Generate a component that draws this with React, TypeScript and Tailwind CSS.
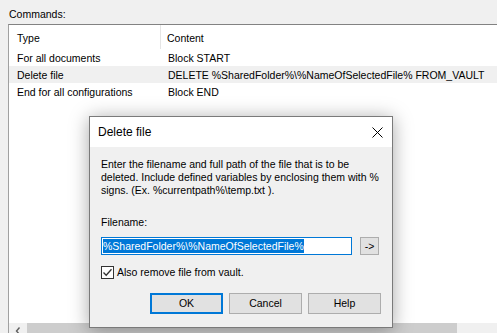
import React from 'react'

const rows = [
  { type: 'For all documents', content: 'Block START', selected: false },
  { type: 'Delete file', content: 'DELETE %SharedFolder%\\%NameOfSelectedFile% FROM_VAULT', selected: true },
  { type: 'End for all configurations', content: 'Block END', selected: false },
]

function DialogButton({ label, primary }: { label: string; primary?: boolean }) {
  return (
    <div
      className={
        primary
          ? 'w-[73px] h-[21px] flex items-center justify-center bg-[#e1e1e1] border-2 border-[#0078d7]'
          : 'w-[73px] h-[21px] flex items-center justify-center bg-[#e1e1e1] border border-[#adadad]'
      }
    >
      {label}
    </div>
  )
}

export default function App() {
  return (
    <div
      className="relative w-[497px] h-[333px] overflow-hidden bg-[#f0f0f0] text-[10.5px] leading-[13px] text-black"
      style={{ fontFamily: '"Liberation Sans", Arial, sans-serif' }}
    >
      <div className="h-[24px] pl-[9px] pt-[8px]">Commands:</div>

      {/* command list */}
      <div className="ml-[8px] h-[309px] flex flex-col bg-white border-l border-t border-l-[#a0a0a0] border-t-[#828282]">
        <div className="h-[24px] flex items-center">
          <div className="w-[152px] h-full flex items-center pl-[8px] pt-[2px] border-r border-[#e5e5e5]">Type</div>
          <div className="pl-[6px] pt-[2px]">Content</div>
        </div>
        {rows.map((r) => (
          <div
            key={r.type}
            className={
              r.selected
                ? 'h-[17px] flex items-center pt-[2px] bg-[#f0f0f0]'
                : 'h-[17px] flex items-center pt-[2px]'
            }
          >
            <div className="w-[152px] pl-[8px] whitespace-nowrap">{r.type}</div>
            <div className="pl-[7px] whitespace-nowrap">{r.content}</div>
          </div>
        ))}
        <div className="flex-1" />
        <div className="h-[10px] flex">
          <div className="w-[18px] bg-[#f0f0f0] flex justify-center pt-[4px]">
            <svg width="6" height="8" viewBox="0 0 6 8">
              <path d="M4.5 0.5 L1.5 4 L4.5 7.5" fill="none" stroke="#606060" strokeWidth="1.4" />
            </svg>
          </div>
          <div className="w-[430px] bg-[#cdcdcd]" />
          <div className="flex-1 bg-[#f0f0f0]" />
        </div>
      </div>

      {/* Delete file dialog */}
      <div className="absolute left-[89px] top-[116px] w-[304px] h-[212px] flex flex-col bg-[#f0f0f0] border border-[#7a7a7a] shadow-[0_2px_18px_rgba(0,0,0,0.35)]">
        <div className="h-[30px] bg-white flex items-center justify-between pl-[8px] pr-[9px]">
          <span className="text-[12px]">Delete file</span>
          <svg width="11" height="11" viewBox="0 0 11 11">
            <path d="M0.5 0.5 L10.5 10.5 M10.5 0.5 L0.5 10.5" stroke="#000" strokeWidth="1" />
          </svg>
        </div>
        <div className="flex flex-col pl-[11px] pr-[11px] pt-[11px]">
          <p className="whitespace-nowrap">
            Enter the filename and full path of the file that is to be
            <br />
            deleted. Include defined variables by enclosing them with %
            <br />
            signs. (Ex. %currentpath%\temp.txt ).
          </p>
          <div className="mt-[19px]">Filename:</div>
          <div className="mt-[8px] flex items-center gap-[8px]">
            <div className="w-[251px] h-[18px] bg-white border border-[#0078d7] flex items-center pl-[1px]">
              <span className="bg-[#0078d7] text-white h-[14px] leading-[14px] whitespace-nowrap">
                %SharedFolder%\%NameOfSelectedFile%
              </span>
            </div>
            <div className="w-[19px] h-[18px] bg-[#e1e1e1] border border-[#adadad] flex items-center justify-center">
              -&gt;
            </div>
          </div>
          <div className="mt-[11px] flex items-center gap-[3px]">
            <div className="w-[13px] h-[13px] bg-white border border-[#333333] flex items-center justify-center">
              <svg width="11" height="11" viewBox="0 0 11 11">
                <path d="M1.5 5.5 L4.2 8.3 L9.5 2.2" fill="none" stroke="#333333" strokeWidth="1.3" />
              </svg>
            </div>
            <span>Also remove file from vault.</span>
          </div>
          <div className="mt-[14px] flex justify-end gap-[6px]">
            <DialogButton label="OK" primary />
            <DialogButton label="Cancel" />
            <DialogButton label="Help" />
          </div>
        </div>
      </div>
    </div>
  )
}
